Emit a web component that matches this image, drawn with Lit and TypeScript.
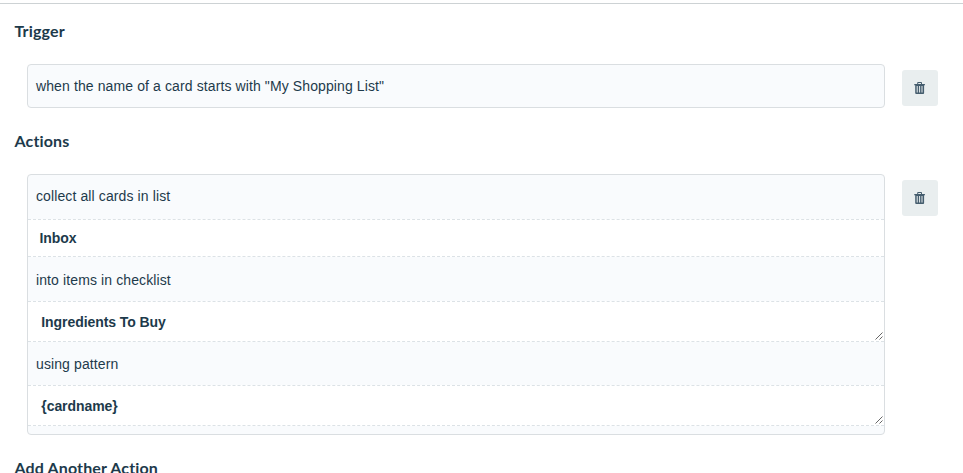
import { LitElement, html, css } from 'lit';
import { customElement, property } from 'lit/decorators.js';

/** Square button that removes a trigger or an action. */
@customElement('rule-delete')
export class RuleDelete extends LitElement {
  static styles = css`
    :host {
      display: block;
      flex: none;
      margin-top: 6px;
    }
    .button {
      display: flex;
      align-items: center;
      justify-content: center;
      width: 36px;
      height: 36px;
      padding: 0;
      border: 0;
      border-radius: 3px;
      background: #e9eeef;
      color: #455d6e;
    }
    .icon {
      display: block;
      width: 12px;
      height: 12px;
    }
  `;

  render() {
    return html`
      <button class="button" aria-label="Delete">
        <svg class="icon" viewBox="0 0 12 12" fill="currentColor">
          <path d="M3.2 2V.9Q3.2 0 4.1 0h3Q8 0 8 .9V2h2.5q.5 0 .5.5v.7H.2v-.7q0-.5.5-.5zM4.2 2H7V1H4.2z" fill-rule="evenodd" />
          <path
            d="M1.2 3h8.9v8q0 1-1 1H2.2q-1 0-1-1zM2.7 4v6.6h1V4zM5.1 4v6.6h1V4zM7.5 4v6.6h1V4z"
            fill-rule="evenodd"
          />
        </svg>
      </button>
    `;
  }
}

/** Editable value between two dashed rules. */
@customElement('rule-field')
export class RuleField extends LitElement {
  @property() value = '';
  @property({ type: Boolean, reflect: true }) resizable = false;

  static styles = css`
    :host {
      display: flex;
      justify-content: space-between;
      align-items: flex-end;
      box-sizing: border-box;
      height: 38px;
      padding: 0 1px 0 11.5px;
      border: 1px dashed #dce2e6;
      border-width: 1px 0;
      background: #fff;
      font-weight: bold;
      letter-spacing: -0.07px;
    }
    :host([resizable]) {
      height: 41px;
      padding-left: 13.3px;
    }
    .value {
      align-self: flex-start;
      padding-top: 8px;
    }
    :host([resizable]) .value {
      padding-top: 10px;
    }
    .grip {
      display: block;
      width: 8px;
      height: 8px;
      margin-bottom: 1px;
    }
  `;

  render() {
    return html`
      <span class="value">${this.value}</span>
      ${this.resizable
        ? html`<svg class="grip" viewBox="0 0 8 8" stroke="#555" stroke-width="0.9">
            <path d="M0.5 7.5l7-7M4.5 7.5l3-3" />
          </svg>`
        : ''}
    `;
  }
}

@customElement('app-root')
export class AppRoot extends LitElement {
  static styles = css`
    :host {
      display: block;
      box-sizing: border-box;
      height: 473px;
      padding-top: 3px;
      overflow: hidden;
      background: #fff;
      color: #1d3a4b;
      font-family: 'Liberation Sans', Arial, sans-serif;
      font-size: 14px;
      line-height: 20px;
    }
    .page {
      display: flex;
      flex-direction: column;
      padding: 17px 25px 0 14.5px;
      border-top: 1px solid #cdd2d4;
    }
    .heading {
      margin: 0;
      font-family: Lato, sans-serif;
      font-size: 16px;
      font-weight: bold;
      letter-spacing: 0.14px;
      line-height: 20px;
    }
    .row {
      display: flex;
      align-items: flex-start;
      gap: 17px;
      padding: 23px 0 23px 12.5px;
    }
    .box {
      flex: 1;
      box-sizing: border-box;
      border: 1px solid #dadee1;
      border-radius: 4px;
      background: #f9fbfd;
      overflow: hidden;
    }
    .text {
      box-sizing: border-box;
      height: 44px;
      padding: 11px 8px 0;
      letter-spacing: 0.11px;
    }
    .trigger {
      height: 42px;
    }
    .middle {
      padding-top: 13px;
    }
    .short {
      height: 43px;
      padding-top: 12px;
    }
    .end {
      height: 8px;
    }
  `;

  render() {
    return html`
      <main class="page">
        <h2 class="heading">Trigger</h2>
        <div class="row">
          <div class="box">
            <div class="text trigger">when the name of a card starts with "My Shopping List"</div>
          </div>
          <rule-delete></rule-delete>
        </div>
        <h2 class="heading">Actions</h2>
        <div class="row">
          <div class="box">
            <div class="text">collect all cards in list</div>
            <rule-field value="Inbox"></rule-field>
            <div class="text middle">into items in checklist</div>
            <rule-field value="Ingredients To Buy" resizable></rule-field>
            <div class="text short">using pattern</div>
            <rule-field value="{cardname}" resizable></rule-field>
            <div class="end"></div>
          </div>
          <rule-delete></rule-delete>
        </div>
        <h2 class="heading">Add Another Action</h2>
      </main>
    `;
  }
}

declare global {
  interface HTMLElementTagNameMap {
    'rule-delete': RuleDelete;
    'rule-field': RuleField;
    'app-root': AppRoot;
  }
}
